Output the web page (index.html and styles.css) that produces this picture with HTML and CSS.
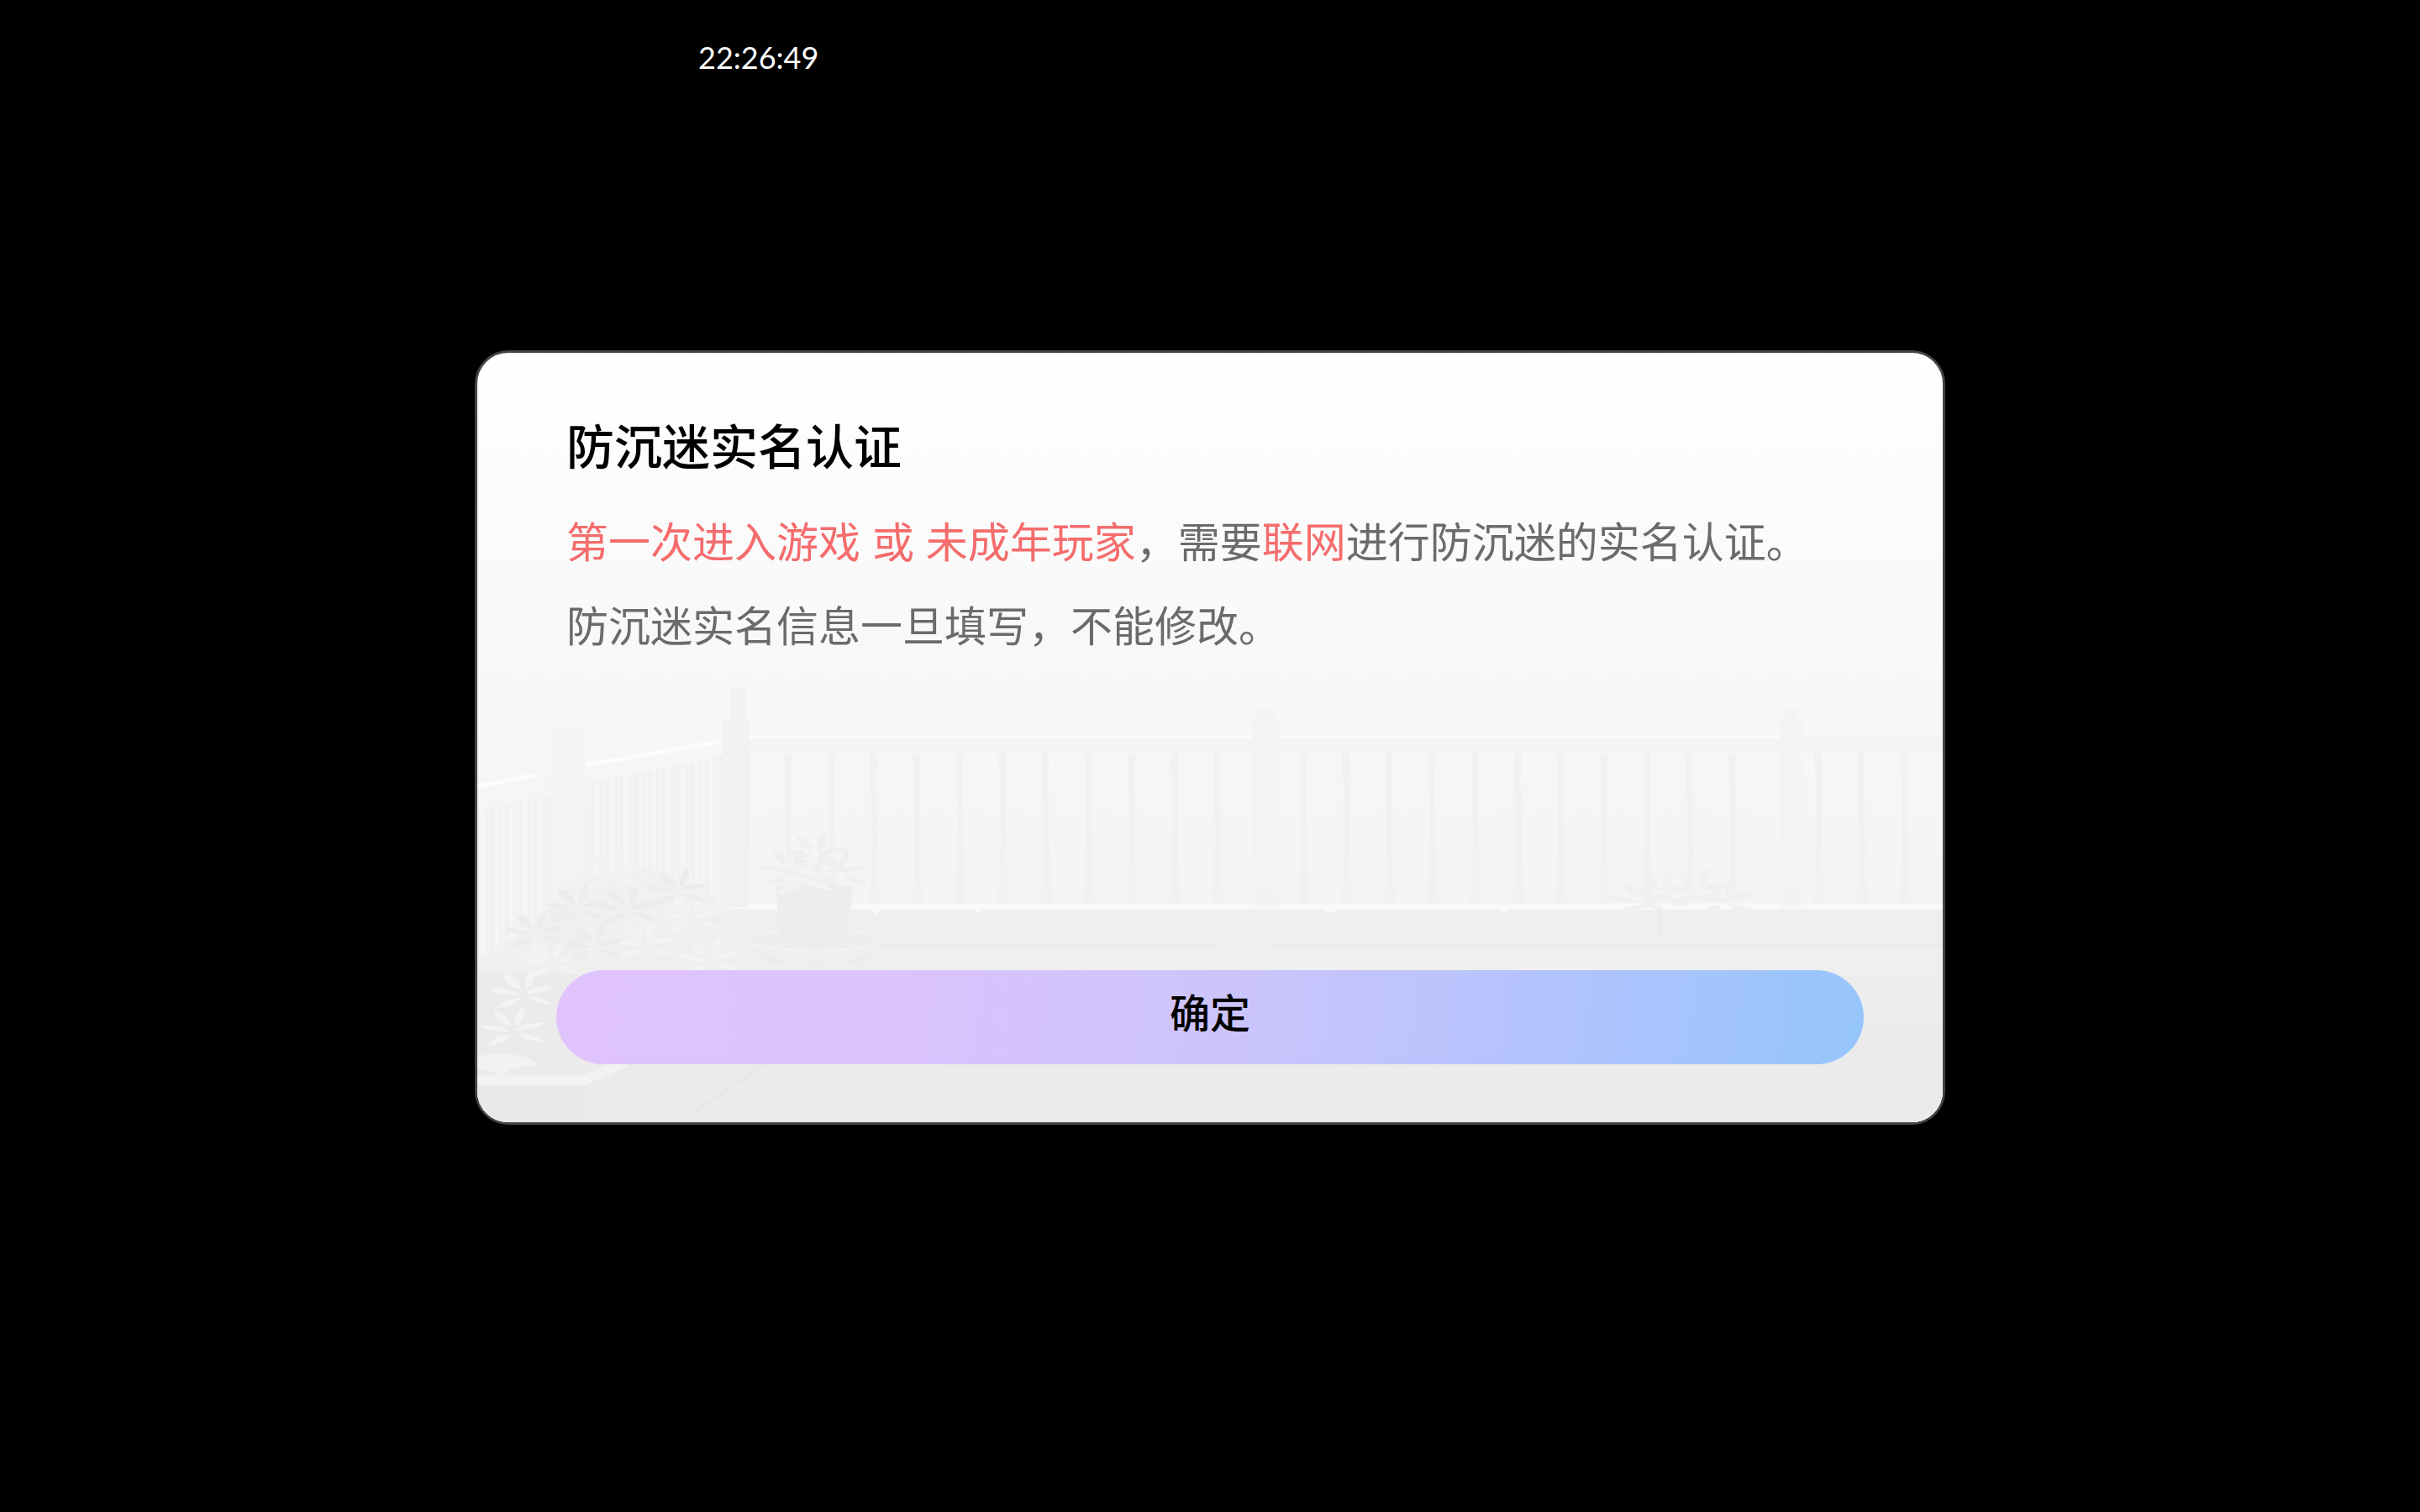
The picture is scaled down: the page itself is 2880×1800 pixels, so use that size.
FILE: index.html
```html
<!DOCTYPE html>
<html lang="zh-CN">
<head>
    <meta charset="UTF-8">
    <meta name="viewport" content="width=device-width, initial-scale=1.0">
    <title>防沉迷实名认证</title>
    <link rel="stylesheet" href="styles.css">
</head>
<body>

    <!-- Status bar -->
    <header class="status-bar">
        <time class="clock">22:26:49</time>
    </header>

    <!-- Dialog -->
    <main class="screen">
        <section class="dialog" role="dialog" aria-labelledby="dialogTitle">
            <svg class="scene" viewBox="0 0 1744 916" preserveAspectRatio="xMidYMax slice" aria-hidden="true">
                <defs>
                    <pattern id="balusters" x="343" y="478" width="51.1" height="187" patternUnits="userSpaceOnUse">
                        <path d="M22 0h9l-1 30 1 60 1 72h2v16h-13v-16h2l1-72-1-60z" fill="#f1f1f1"/>
                    </pattern>
                    <pattern id="pickets" x="4" width="17" height="400" patternUnits="userSpaceOnUse">
                        <rect width="5" height="400" fill="#f5f5f5"/>
                        <rect x="9" width="3" height="400" fill="#f4f4f4"/>
                        <rect x="13" width="2" height="400" fill="#f0f0f0"/>
                    </pattern>
                    <path id="leaves" d="M0 0q14-10 36-8q-14 10-36 8zM-4 2q-18-10-36-6q16 8 36 6zM2-4q-4-14 8-24q6 14-8 24zM-4-4q-18-4-20-18q18 2 20 18zM4 4q18 0 30 10q-20 0-30-10zM-4 6q-8 12-28 12q8-12 28-12z"/>
                </defs>

                <!-- Ground -->
                <rect y="662" width="1744" height="254" fill="#efefef"/>
                <rect y="740" width="1744" height="176" fill="#ededed"/>
                <rect y="800" width="1744" height="116" fill="#ebebeb"/>

                <!-- Back fence -->
                <rect x="322" y="458" width="1422" height="19" fill="#f4f4f4"/>
                <rect x="343" y="478" width="562" height="178" fill="url(#balusters)"/>
                <rect x="967" y="478" width="562" height="178" fill="url(#balusters)"/>
                <rect x="1590" y="478" width="154" height="178" fill="url(#balusters)"/>
                <path d="M322 457h600M952 457h598" stroke="#fcfcfc" stroke-width="4"/>
                <path d="M310 659h1434" stroke="#f9f9f9" stroke-width="7"/>
                <path d="M468 662h12l-6 8zM590 662h12l-6 6zM1004 662h24l-12 5zM1216 662h12l-6 5z" fill="#f9f9f9"/>
                <path d="M926 424h22v12h6v223h-32V436h4zM1554 424h18v12h4v226h-26V436h4z" fill="#f1f1f1" opacity="0.6"/>
                <path d="M940 706h804M322 706h560" stroke="#ececec" stroke-width="3"/>

                <!-- Side fence -->
                <path d="M0 545l86-18v195H0zM129 512l163-32v180l-163 62z" fill="#f2f2f2"/>
                <path d="M0 545l86-18v195H0zM129 512l163-32v180l-163 62z" fill="url(#pickets)"/>
                <path d="M86 445h43v280H86z" fill="#f1f1f1" opacity="0.35"/>
                <path d="M302 400h18v38h4v222h-32V438h10z" fill="#f0f0f0" opacity="0.7"/>
                <path d="M0 516l68-13M129 491l159-28" stroke="#fdfdfd" stroke-width="5"/>

                <!-- Plants on the left -->
                <path d="M0 720l70-40 40-50 80-20 80 30 40 40 10 60-20 60H0z" fill="#efefef" opacity="0.7"/>
                <path d="M0 740h120v110H0z" fill="#ebebeb"/>
                <g fill="#f3f3f3">
                    <use href="#leaves" x="160" y="620"/>
                    <use href="#leaves" x="258" y="672"/>
                    <use href="#leaves" x="90" y="726"/>
                    <use href="#leaves" x="200" y="704"/>
                    <use href="#leaves" x="278" y="722"/>
                    <use href="#leaves" x="56" y="762"/>
                    <use href="#leaves" x="44" y="806"/>
                </g>
                <g fill="#ececec">
                    <use href="#leaves" x="120" y="660"/>
                    <use href="#leaves" x="180" y="662"/>
                    <use href="#leaves" x="240" y="640"/>
                    <use href="#leaves" x="140" y="706"/>
                    <use href="#leaves" x="70" y="690"/>
                </g>
                <path d="M0 838q40-12 76 10q-40 0-46 14q-14-10-30-10z" fill="#f2f2f2"/>

                <!-- Flower pot -->
                <path d="M320 705q82 50 164 0l-30 22H348z" fill="#ececec"/>
                <ellipse cx="402" cy="699" rx="82" ry="12" fill="#eeeeee" stroke="#f3f3f3" stroke-width="2"/>
                <path d="M355 634h92l-6 74q-40 6-80 0z" fill="#ededed"/>
                <g fill="#efefef">
                    <use href="#leaves" x="376" y="616"/>
                    <use href="#leaves" x="404" y="598"/>
                    <use href="#leaves" x="430" y="618"/>
                    <use href="#leaves" x="402" y="622"/>
                </g>
                <g fill="#f3f3f3">
                    <use href="#leaves" x="390" y="626"/>
                </g>

                <!-- Bushes on the right -->
                <g fill="#f0f0f0">
                    <use href="#leaves" x="1386" y="652"/>
                    <use href="#leaves" x="1410" y="644"/>
                    <use href="#leaves" x="1454" y="640"/>
                    <use href="#leaves" x="1484" y="652"/>
                </g>
                <path d="M1405 662h5v34h-5z" fill="#ececec"/>

                <!-- Curb -->
                <path d="M0 866h127l50-22" fill="none" stroke="#f2f2f2" stroke-width="12"/>
                <path d="M0 873h129v43H0z" fill="#e9e9e9"/>
                <path d="M342 846l-100 70" stroke="#e7e7e7" stroke-width="3"/>
            </svg>

            <div class="dialog-text">
                <h1 id="dialogTitle">防沉迷实名认证</h1>
                <p><em>第一次进入游戏 或 未成年玩家</em>，需要<em>联网</em>进行防沉迷的实名认证。</p>
                <p>防沉迷实名信息一旦填写，不能修改。</p>
            </div>
            <button type="button" class="confirm-btn">确定</button>
        </section>
    </main>

</body>
</html>
```
FILE: styles.css
```css
* {
    margin: 0;
    padding: 0;
    box-sizing: border-box;
}

body {
    display: flex;
    flex-direction: column;
    min-height: 100vh;
    background: #000;
    font-family: "Liberation Sans", "Noto Sans CJK SC", sans-serif;
}

/* Status bar */
.status-bar {
    padding: 44px 0 0 831px;
}

.clock {
    display: block;
    font-family: Lato, sans-serif;
    font-size: 36px;
    line-height: 48px;
    color: #fff;
}

/* Dialog */
.screen {
    flex: 1;
    display: flex;
    align-items: center;
    justify-content: center;
    padding: 0 40px 136px;
}

.dialog {
    position: relative;
    display: flex;
    flex-direction: column;
    width: 100%;
    max-width: 1750px;
    min-height: 922px;
    padding: 73px 94px 69px;
    border: 3px solid #444;
    border-radius: 40px;
    background: linear-gradient(#fff, #fcfcfc 15%, #f8f8f8 40%, #f4f4f4 70%, #ebebeb);
    overflow: hidden;
}

.scene {
    position: absolute;
    top: 0;
    left: 0;
    width: 100%;
    height: 100%;
}

.dialog-text {
    position: relative;
    padding: 0 12px;
}

.dialog-text h1 {
    margin-bottom: 24px;
    font-size: 57px;
    font-weight: 500;
    line-height: 80px;
    color: #000;
}

.dialog-text p {
    font-size: 50px;
    line-height: 100px;
    color: #6b6b6b;
}

.dialog-text em {
    font-style: normal;
    color: #f56c6c;
}

.confirm-btn {
    position: relative;
    width: 100%;
    height: 112px;
    margin-top: auto;
    padding-bottom: 16px;
    border: none;
    border-radius: 56px;
    background: linear-gradient(96deg, #e0c3fc, #dcc3fc 25%, #cbc4fc 53%, #b3c3fd 75%, #95c5fc);
    font-family: inherit;
    font-size: 48px;
    font-weight: 500;
    color: #000;
    cursor: pointer;
}
```
